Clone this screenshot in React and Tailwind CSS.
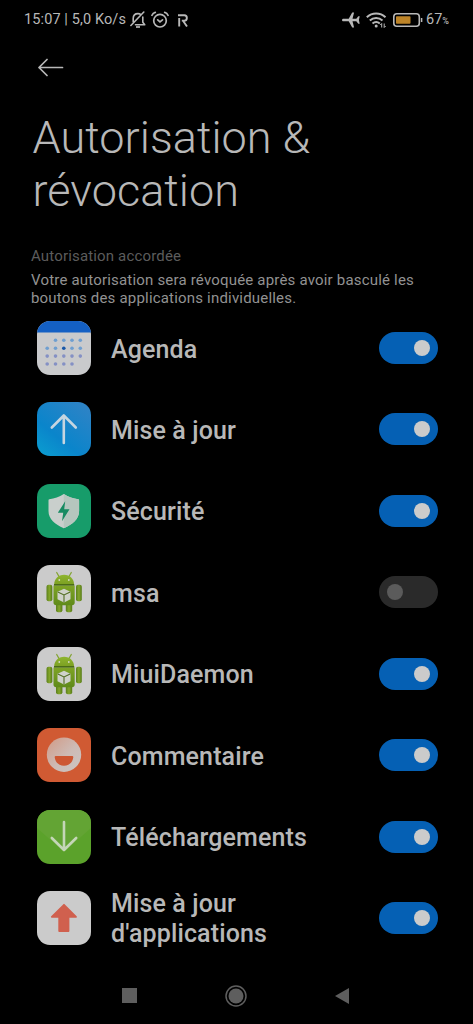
import { useState } from 'react'

function AgendaIcon() {
  const rows = [
    { y: 19.3, xs: [18.5, 26.8, 35, 43.3] },
    { y: 27.2, xs: [10.2, 18.5, 26.8, 35, 43.3] },
    { y: 35.1, xs: [10.2, 18.5, 26.8, 35, 43.3] },
    { y: 43, xs: [10.2, 18.5, 26.8, 35] },
  ]
  return (
    <svg viewBox="0 0 54 54" className="w-full h-full">
      <rect width="54" height="54" fill="#c9cacc" />
      <rect width="54" height="11.5" fill="#1460c4" />
      {rows.map((r, i) =>
        r.xs.map((x, j) => {
          const today = i === 1 && j === 2
          return (
            <circle key={`${i}-${j}`} cx={x} cy={r.y} r="1.8" fill={today ? '#1757a8' : i < 2 ? '#6f9fd0' : '#8490c4'} />
          )
        })
      )}
    </svg>
  )
}

function UpdateIcon() {
  return (
    <svg viewBox="0 0 54 54" className="w-full h-full" fill="none">
      <defs>
        <linearGradient id="update-bg" x1="0" y1="1" x2="0.8" y2="0">
          <stop offset="0" stopColor="#0b9fd0" />
          <stop offset="0.4" stopColor="#0a85cb" />
          <stop offset="1" stopColor="#2d83c6" />
        </linearGradient>
      </defs>
      <rect width="54" height="54" fill="url(#update-bg)" />
      <path d="M26.8 41V13.5M14.8 25.5l12-12 12 12" stroke="#c6d5e0" strokeWidth="2.6" strokeLinecap="round" strokeLinejoin="round" />
    </svg>
  )
}

function SecurityIcon() {
  return (
    <svg viewBox="0 0 54 54" className="w-full h-full">
      <rect width="54" height="54" fill="#179c6a" />
      <path d="M26.8 10c4.5 3 9.5 4.6 14.4 5.2.6.1.9.5.9 1.2V27c0 8-6.500 13.500-15.300 17.300C18 40.500 11.500 35 11.500 27V16.400c0-.7.3-1.100.9-1.200C17.300 14.600 22.300 13 26.800 10z" fill="#c9cfcc" />
      <path d="M26.8 10c4.5 3 9.5 4.6 14.4 5.2.6.1.9.5.9 1.2V27c0 8-6.500 13.500-15.300 17.300z" fill="#b5c6be" />
      <path d="M28.200 17.300 20.800 28.800h5.400L25 37.300l7.500-12h-5.300z" fill="#178b62" />
    </svg>
  )
}

function AndroidIcon() {
  return (
    <svg viewBox="0 0 54 54" className="w-full h-full">
      <defs>
        <linearGradient id="droid-head" x1="0" y1="0" x2="0" y2="1">
          <stop offset="0" stopColor="#8fb52f" />
          <stop offset="1" stopColor="#7ca022" />
        </linearGradient>
        <linearGradient id="droid-body" x1="0" y1="0" x2="0" y2="1">
          <stop offset="0" stopColor="#7fa425" />
          <stop offset="1" stopColor="#5f8a1a" />
        </linearGradient>
        <linearGradient id="droid-limb" x1="0" y1="0" x2="1" y2="0">
          <stop offset="0" stopColor="#5b801b" />
          <stop offset="0.5" stopColor="#84a62b" />
          <stop offset="1" stopColor="#567b18" />
        </linearGradient>
      </defs>
      <rect width="54" height="54" fill="#cbcbcb" />
      <path d="M22 11.500 19.700 7.500M32 11.500 34.300 7.500" stroke="#84a436" strokeWidth="1.300" strokeLinecap="round" />
      <rect x="9.500" y="19.800" width="5.800" height="16.500" rx="2" fill="url(#droid-limb)" />
      <rect x="39" y="19.800" width="5.800" height="16.500" rx="2" fill="url(#droid-limb)" />
      <rect x="19" y="36" width="6.400" height="11.300" rx="2" fill="url(#droid-limb)" />
      <rect x="28.800" y="36" width="6.400" height="11.300" rx="2" fill="url(#droid-limb)" />
      <path d="M17.200 19.300c0-5.300 4.200-9.500 9.900-9.500s9.900 4.200 9.900 9.500z" fill="url(#droid-head)" />
      <path d="M16.500 20.500h21.200v17c0 1.700-1 2.700-2.700 2.700H19.200c-1.700 0-2.700-1-2.700-2.700z" fill="url(#droid-body)" />
      <rect x="17" y="19" width="20.200" height="1.600" fill="#4a6c15" />
      <circle cx="22.300" cy="15" r="0.900" fill="#d3d8c4" />
      <circle cx="31.800" cy="15" r="0.900" fill="#d3d8c4" />
      <path d="m27 23.800 6.500 3v7.400L27 37.600l-6.500-3.400v-7.400z" fill="#cfd2ca" />
      <path d="m20.800 27 6.200 2.900 6.200-2.900M27 29.900v7.400" fill="none" stroke="#526d24" strokeWidth="1.100" />
    </svg>
  )
}

function FeedbackIcon() {
  return (
    <svg viewBox="0 0 54 54" className="w-full h-full">
      <defs>
        <linearGradient id="face" x1="0" y1="0" x2="1" y2="1">
          <stop offset="0" stopColor="#d19a86" />
          <stop offset="0.55" stopColor="#cdbbb5" />
          <stop offset="1" stopColor="#cbc5c3" />
        </linearGradient>
      </defs>
      <rect width="54" height="54" fill="#d05a33" />
      <circle cx="27" cy="26.700" r="17.200" fill="url(#face)" />
      <path d="M18.800 28h16.400c.8 0 1.200.4 1.100 1.200-.6 5.200-4.300 8.600-9.300 8.600s-8.700-3.400-9.300-8.600c-.1-.8.3-1.200 1.100-1.200z" fill="#cd5733" />
    </svg>
  )
}

function DownloadsIcon() {
  return (
    <svg viewBox="0 0 54 54" className="w-full h-full" fill="none">
      <rect width="54" height="54" fill="#5ba22b" />
      <path d="M0 18 27 42 54 18V0H0z" fill="#63a434" />
      <path d="M27 12v28M14.800 28l12.200 12 12.200-12" stroke="#c4d6b7" strokeWidth="2.600" strokeLinecap="round" strokeLinejoin="round" />
    </svg>
  )
}

function AppUpdaterIcon() {
  return (
    <svg viewBox="0 0 54 54" className="w-full h-full">
      <rect width="54" height="54" fill="#cbcbcb" />
      <path d="M27 13.800 39 25.800H31.500V40H22.200V25.800H14.800z" fill="#d0604e" stroke="#d0604e" strokeWidth="1.800" strokeLinejoin="round" />
    </svg>
  )
}

const APPS = [
  { id: 'agenda', label: 'Agenda', icon: AgendaIcon, granted: true },
  { id: 'update', label: 'Mise à jour', icon: UpdateIcon, granted: true },
  { id: 'security', label: 'Sécurité', icon: SecurityIcon, granted: true },
  { id: 'msa', label: 'msa', icon: AndroidIcon, granted: false },
  { id: 'daemon', label: 'MiuiDaemon', icon: AndroidIcon, granted: true },
  { id: 'feedback', label: 'Commentaire', icon: FeedbackIcon, granted: true },
  { id: 'downloads', label: 'Téléchargements', icon: DownloadsIcon, granted: true },
  { id: 'updater', label: "Mise à jour d'applications", icon: AppUpdaterIcon, granted: true },
]

function Toggle({ on, label, onChange }) {
  return (
    <button
      role="switch"
      aria-checked={on}
      aria-label={label}
      onClick={onChange}
      className={`flex items-center w-[59px] h-8 shrink-0 px-2 rounded-full ${on ? 'justify-end bg-[#0560b4]' : 'justify-start bg-[#2a2a2a]'}`}
    >
      <span className={`w-4 h-4 rounded-full ${on ? 'bg-[#cbcbcb]' : 'bg-[#5b5b5b]'}`} />
    </button>
  )
}

function StatusBar() {
  return (
    <div className="flex items-center h-10 pl-6 pr-6 text-[#b8b8b8]">
      <span className="w-[103px] pt-px whitespace-nowrap text-[14.5px] leading-none tracking-[0.11px]">15:07 | 5,0 Ko/s</span>
      {/* muted bell */}
      <svg width="16" height="18" viewBox="0 0 16 18" className="ml-[3px]" fill="none" stroke="currentColor" strokeWidth="1.600">
        <path d="M3.200 11V7.500c0-3 2-4.900 4.800-4.900 1 0 1.900.3 2.700.8M12.800 6v5.300l1.900 2.500H5.500M.9 14.500 13.800 1" strokeLinecap="round" strokeLinejoin="round" />
        <path d="M6 16h4" strokeWidth="1.700" />
      </svg>
      {/* alarm */}
      <svg width="18" height="18" viewBox="0 0 18 18" className="ml-[5px]" fill="none" stroke="currentColor" strokeWidth="1.700" strokeLinecap="round">
        <circle cx="9" cy="9.700" r="6.300" />
        <path d="m6.700 8.800 2.300 2 2.500-2M1 4.300C1.600 2.800 2.700 1.800 4.300 1.400M17 4.300C16.400 2.800 15.300 1.800 13.700 1.400" />
      </svg>
      {/* R notification */}
      <svg width="10" height="13" viewBox="0 0 10 13" className="ml-[9px]" fill="none" stroke="currentColor" strokeWidth="1.900">
        <path d="M0 1.200h6.300c3.400 0 3.400 5.400 0 5.400H3.800M1.200 4v8.500M5 6.800l4 5.700" />
      </svg>
      <div className="flex items-center ml-auto">
        <svg width="18" height="16" viewBox="0 0 18 16" fill="currentColor">
          <path d="M0 8c0-.7.6-1.300 1.500-1.300h5.200L10.200.5h1.900l-1.600 6.200h3.800l2-2.400h1.400L16.900 8l.8 3.700h-1.400l-2-2.400h-3.800l1.600 6.200h-1.900L6.700 9.300H1.500C.6 9.300 0 8.700 0 8z" />
        </svg>
        <svg width="21" height="16" viewBox="0 0 21 16" className="ml-[6px]" fill="none" stroke="currentColor" strokeWidth="2">
          <path d="M.8 5.200c5.300-5 13.400-5 18.700 0M3.800 8.500c3.700-3.400 9-3.400 12.700 0M6.500 11.500c2.200-1.900 5.100-1.900 7.300 0" />
          <circle cx="10.200" cy="13.900" r="1.500" fill="currentColor" stroke="none" />
          <path d="M15.700 11.500v4M14.200 13l1.500-1.500M18.200 11.500v4M19.700 14l-1.500 1.500" strokeWidth="1" />
        </svg>
        <svg width="30" height="14" viewBox="0 0 30 14" className="ml-[6px]" fill="none">
          <rect x="0.800" y="0.800" width="25.500" height="12.400" rx="3" stroke="#b8b8b8" strokeWidth="1.600" />
          <rect x="3" y="3.200" width="14.500" height="7.600" rx="0.800" fill="#bd8428" />
          <path d="M28.600 5v4" stroke="#b8b8b8" strokeWidth="1.500" />
        </svg>
        <span className="flex items-baseline ml-[3px] pt-px text-[14.5px] leading-none">
          67<span className="text-[9px] font-medium">%</span>
        </span>
      </div>
    </div>
  )
}

export default function App() {
  const [apps, setApps] = useState(APPS)

  const toggle = (id) => setApps(apps.map((a) => (a.id === id ? { ...a, granted: !a.granted } : a)))

  return (
    <div className="flex flex-col w-[473px] h-[1024px] overflow-hidden bg-black text-[#b8b8b8] font-['Roboto',sans-serif]">
      <StatusBar />

      <header className="h-[207px] pt-[18px]">
        <button aria-label="Retour" className="block ml-[38px]">
          <svg width="26" height="19" viewBox="0 0 26 19" fill="none" stroke="currentColor" strokeWidth="1.700" strokeLinecap="round" strokeLinejoin="round">
            <path d="M24.500 9.500H1M9 1.500l-8 8 8 8" />
          </svg>
        </button>
        <h1 className="mt-[34px] ml-[32.500px] text-[45px] leading-[53px] font-light tracking-[0.04px]">
          Autorisation &amp;
          <br />
          révocation
        </h1>
      </header>

      <section className="h-[60.300px] pl-[31px]">
        <h2 className="text-[15px] leading-[19px] text-[#5c5c5c] tracking-[0.160px]">Autorisation accordée</h2>
        <p className="mt-[5px] text-[15px] leading-[18px] text-[#929292] tracking-[0.190px]">
          Votre autorisation sera révoquée après avoir basculé les
          <br />
          boutons des applications individuelles.
        </p>
      </section>

      <ul className="flex flex-col">
        {apps.map((a) => (
          <li key={a.id} className="flex items-center h-[81.430px] pl-[37px] pr-[35px]">
            <div className="w-[54px] h-[54px] shrink-0 rounded-[13px] overflow-hidden">
              <a.icon />
            </div>
            <span className="flex-1 ml-5 pr-14 pt-[3px] text-[25px] leading-[30px] font-medium tracking-[0.130px]">{a.label}</span>
            <Toggle on={a.granted} label={a.label} onChange={() => toggle(a.id)} />
          </li>
        ))}
      </ul>

      <nav className="flex items-center justify-between h-[22px] mt-[26px] pl-[122px] pr-[124px] text-[#5e5e5e]">
        <span className="w-[15px] h-[15px] bg-current" />
        <svg width="22" height="22" viewBox="0 0 22 22" fill="none">
          <circle cx="11" cy="11" r="10" stroke="currentColor" strokeWidth="1.500" />
          <circle cx="11" cy="11" r="7.500" fill="currentColor" />
        </svg>
        <svg width="14" height="16" viewBox="0 0 14 16" fill="currentColor">
          <path d="M14 0v16L0 8z" />
        </svg>
      </nav>
    </div>
  )
}
